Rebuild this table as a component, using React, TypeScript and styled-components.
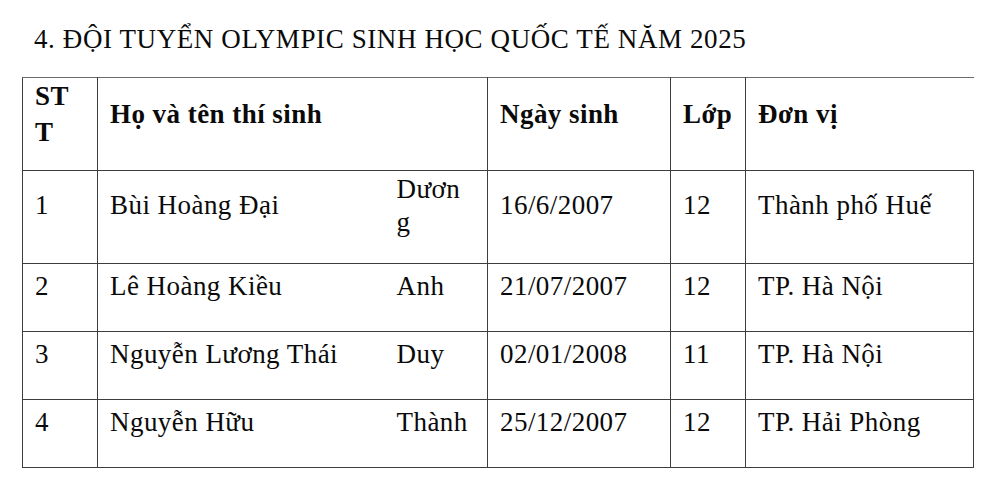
import React from "react";
import styled, { createGlobalStyle } from "styled-components";

const GlobalStyle = createGlobalStyle`
  html, body { margin: 0; padding: 0; background: #ffffff; }
  body { font-family: "Liberation Serif", "Times New Roman", serif; color: #0a0a0a; }
`;

const Page = styled.div`
  padding: 21px 0 0 22px;
  width: 1000px;
  box-sizing: border-box;
`;

const Title = styled.h1`
  margin: 0 0 20px 12px;
  font-size: 27px;
  line-height: 36px;
  font-weight: 400;
  letter-spacing: 0.6px;
`;

const Table = styled.table`
  border-collapse: collapse;
  table-layout: fixed;
  width: 951px;
  font-size: 27px;
  letter-spacing: 0.45px;
`;

const HeadRow = styled.tr`
  height: 92px;
`;

const Row = styled.tr<{ $tall?: boolean }>`
  height: ${(p) => (p.$tall ? 93 : 68)}px;
`;

const Th = styled.th<{ $noRight?: boolean; $narrow?: number }>`
  border: 1.5px solid #3d3d3d;
  border-top-color: #6a6a6a;
  ${(p) => (p.$noRight ? "border-right: none;" : "")}
  text-align: left;
  vertical-align: middle;
  font-weight: 700;
  line-height: 36px;
  padding: 0 ${(p) => p.$narrow ?? 12}px 20px 12px;
  word-break: break-all;
`;

const Td = styled.td<{ $join?: "left" | "right"; $padL?: number; $padR?: number }>`
  border: 1.5px solid #3d3d3d;
  ${(p) => (p.$join === "left" ? "border-left: none;" : "")}
  ${(p) => (p.$join === "right" ? "border-right: none;" : "")}
  vertical-align: middle;
  line-height: 33px;
  padding: 0 ${(p) => p.$padR ?? 12}px 23px ${(p) => p.$padL ?? 12}px;
  word-break: break-all;
`;

type Student = { stt: string; ho: string; ten: string; ngay: string; lop: string; donvi: string };

const students: Student[] = [
  { stt: "1", ho: "Bùi Hoàng Đại", ten: "Dương", ngay: "16/6/2007", lop: "12", donvi: "Thành phố Huế" },
  { stt: "2", ho: "Lê Hoàng Kiều", ten: "Anh", ngay: "21/07/2007", lop: "12", donvi: "TP. Hà Nội" },
  { stt: "3", ho: "Nguyễn Lương Thái", ten: "Duy", ngay: "02/01/2008", lop: "11", donvi: "TP. Hà Nội" },
  { stt: "4", ho: "Nguyễn Hữu", ten: "Thành", ngay: "25/12/2007", lop: "12", donvi: "TP. Hải Phòng" },
];

export default function App() {
  return (
    <>
      <GlobalStyle />
      <Page>
        <Title>4. ĐỘI TUYỂN OLYMPIC SINH HỌC QUỐC TẾ NĂM 2025</Title>
        <Table>
          <colgroup>
            <col style={{ width: 75 }} />
            <col style={{ width: 289 }} />
            <col style={{ width: 101 }} />
            <col style={{ width: 183 }} />
            <col style={{ width: 75 }} />
            <col style={{ width: 228 }} />
          </colgroup>
          <thead>
            <HeadRow>
              <Th $narrow={20}>STT</Th>
              <Th colSpan={2}>Họ và tên thí sinh</Th>
              <Th>Ngày sinh</Th>
              <Th>Lớp</Th>
              <Th $noRight>Đơn vị</Th>
            </HeadRow>
          </thead>
          <tbody>
            {students.map((s, i) => (
              <Row key={s.stt} $tall={i === 0}>
                <Td>{s.stt}</Td>
                <Td $join="right">{s.ho}</Td>
                <Td $join="left" $padL={10} $padR={18}>{s.ten}</Td>
                <Td>{s.ngay}</Td>
                <Td>{s.lop}</Td>
                <Td>{s.donvi}</Td>
              </Row>
            ))}
          </tbody>
        </Table>
      </Page>
    </>
  );
}
